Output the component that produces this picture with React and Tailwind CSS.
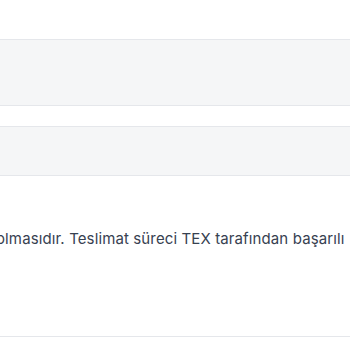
export default function App() {
  return (
    <div className="h-[350px] w-[350px] overflow-hidden bg-white" style={{ fontFamily: 'Inter, "Noto Sans", sans-serif' }}>
      <div className="h-[39px]" />
      <div className="h-[67px] border-y border-[#e5e7eb] bg-[#f5f6f7]" />
      <div className="h-[20px]" />
      <div className="h-[50px] border-y border-[#e5e7eb] bg-[#f5f6f7]" />
      <div className="h-[52px]" />
      <div className="overflow-hidden whitespace-nowrap">
        <p className="-ml-[4px] text-[15px] leading-[22px] tracking-[0.12px] text-[#374151]">
          olmasıdır. Teslimat süreci TEX tarafından başarılı
        </p>
      </div>
      <div className="h-[86px]" />
      <div className="border-t border-[#e5e7eb]" />
    </div>
  )
}
